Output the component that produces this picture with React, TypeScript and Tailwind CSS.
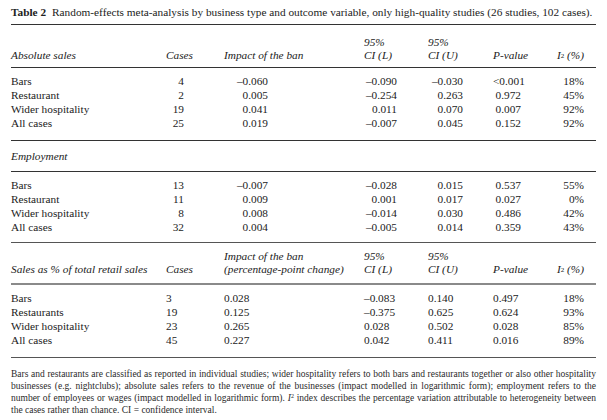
import React from "react";

const COLS = "grid grid-cols-[155px_58px_140px_64px_65px_68px_37px]";

type R = [string, string, string, string, string, string, string];

const sec1: R[] = [
  ["Bars", "4", "–0.060", "–0.090", "–0.030", "<0.001", "18%"],
  ["Restaurant", "2", "0.005", "–0.254", "0.263", "0.972", "45%"],
  ["Wider hospitality", "19", "0.041", "0.011", "0.070", "0.007", "92%"],
  ["All cases", "25", "0.019", "–0.007", "0.045", "0.152", "92%"],
];
const sec2: R[] = [
  ["Bars", "13", "–0.007", "–0.028", "0.015", "0.537", "55%"],
  ["Restaurant", "11", "0.009", "0.001", "0.017", "0.027", "0%"],
  ["Wider hospitality", "8", "0.008", "–0.014", "0.030", "0.486", "42%"],
  ["All cases", "32", "0.004", "–0.005", "0.014", "0.359", "43%"],
];
const sec3: R[] = [
  ["Bars", "3", "0.028", "–0.083", "0.140", "0.497", "18%"],
  ["Restaurants", "19", "0.125", "–0.375", "0.625", "0.624", "93%"],
  ["Wider hospitality", "23", "0.265", "0.028", "0.502", "0.028", "85%"],
  ["All cases", "45", "0.227", "0.042", "0.411", "0.016", "89%"],
];

function RightRow({ r }: { r: R }) {
  return (
    <div className={`${COLS} h-[14px] leading-[14px] whitespace-nowrap`}>
      <div>{r[0]}</div>
      <div className="w-[18px] text-right">{r[1]}</div>
      <div className="w-[44px] text-right">{r[2]}</div>
      <div className="w-[33px] text-right">{r[3]}</div>
      <div className="w-[35px] text-right">{r[4]}</div>
      <div className="w-[28px] text-right">{r[5]}</div>
      <div className="w-[23px] text-right">{r[6]}</div>
    </div>
  );
}

function LeftRow({ r }: { r: R }) {
  return (
    <div className={`${COLS} h-[14px] leading-[14px] whitespace-nowrap`}>
      <div>{r[0]}</div>
      <div>{r[1]}</div>
      <div>{r[2]}</div>
      <div>{r[3]}</div>
      <div>{r[4]}</div>
      <div>{r[5]}</div>
      <div className="w-[23px] text-right">{r[6]}</div>
    </div>
  );
}

function I2() {
  return (
    <span className="italic">
      I<sup className="text-[7px] not-italic relative -top-[1px]">2</sup> (%)
    </span>
  );
}

const Line = ({ cls }: { cls: string }) => <div className={cls} />;

const just = "text-justify [text-align-last:justify]";

export default function App() {
  return (
    <div className="w-[607px] h-[420px] bg-white text-[#222] px-[11px] pt-[5px] text-[11.3px] font-['Liberation_Serif',serif]">
      <div className="h-[14px] leading-[14px] whitespace-nowrap">
        <span className="font-bold">Table 2</span>
        <span className="ml-[6px]">
          Random-effects meta-analysis by business type and outcome variable, only high-quality studies (26 studies, 102 cases).
        </span>
      </div>
      <Line cls="mt-[5px] h-[1px] bg-[#333]" />
      {/* header 1 */}
      <div className={`${COLS} mt-[11px] leading-[13px] italic whitespace-nowrap`}>
        <div className="pt-[13px]">Absolute sales</div>
        <div className="pt-[13px]">Cases</div>
        <div className="pt-[13px]">Impact of the ban</div>
        <div>
          95%
          <br />
          CI (L)
        </div>
        <div>
          95%
          <br />
          CI (U)
        </div>
        <div className="pt-[13px]">P-value</div>
        <div className="pt-[13px] w-[23px] flex justify-end">
          <I2 />
        </div>
      </div>
      <Line cls="mt-[5px] h-[1px] bg-[#333]" />
      <div className="mt-[6px]">
        {sec1.map((r, i) => (
          <RightRow key={i} r={r} />
        ))}
      </div>
      <Line cls="mt-[10px] h-[1px] bg-[#333]" />
      <div className="mt-[8px] h-[14px] leading-[14px] italic">Employment</div>
      <Line cls="mt-[8px] h-[1px] bg-[#333]" />
      <div className="mt-[6px]">
        {sec2.map((r, i) => (
          <RightRow key={i} r={r} />
        ))}
      </div>
      <Line cls="mt-[8px] h-[1px] bg-[#555]" />
      {/* header 3 */}
      <div className={`${COLS} mt-[7px] leading-[13px] italic whitespace-nowrap`}>
        <div className="pt-[13px]">Sales as % of total retail sales</div>
        <div className="pt-[13px]">Cases</div>
        <div>
          Impact of the ban
          <br />
          (percentage-point change)
        </div>
        <div>
          95%
          <br />
          CI (L)
        </div>
        <div>
          95%
          <br />
          CI (U)
        </div>
        <div className="pt-[13px]">P-value</div>
        <div className="pt-[13px] w-[23px] flex justify-end">
          <I2 />
        </div>
      </div>
      <Line cls="mt-[7px] h-[2px] bg-[#8a8a8a]" />
      <div className="mt-[6px]">
        {sec3.map((r, i) => (
          <LeftRow key={i} r={r} />
        ))}
      </div>
      <Line cls="mt-[10px] h-[1px] bg-[#555]" />
      <div className="mt-[10px] text-[9.5px] leading-[12px] text-[#2a2a2a]">
        <div className={just}>
          Bars and restaurants are classified as reported in individual studies; wider hospitality refers to both bars and restaurants together or also other hospitality
        </div>
        <div className={just}>
          businesses (e.g. nightclubs); absolute sales refers to the revenue of the businesses (impact modelled in logarithmic form); employment refers to the
        </div>
        <div className={just}>
          number of employees or wages (impact modelled in logarithmic form). <span className="italic">I</span>
          <sup className="text-[6px]">2</sup> index describes the percentage variation attributable to heterogeneity between
        </div>
        <div>the cases rather than chance. CI = confidence interval.</div>
      </div>
    </div>
  );
}
